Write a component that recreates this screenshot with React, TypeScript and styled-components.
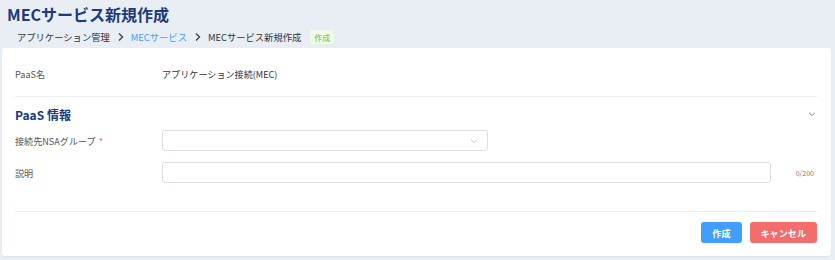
import React from 'react';
import styled, { createGlobalStyle } from 'styled-components';

const GlobalStyle = createGlobalStyle`
  html, body {
    margin: 0;
    padding: 0;
    background: #e9edf4;
    font-family: "Noto Sans CJK JP", "Noto Sans", sans-serif;
    color: #333;
  }
`;

const Page = styled.div`
  width: 835px;
  height: 260px;
  box-sizing: border-box;
  padding: 2px 4px 4px 2px;
  display: flex;
  flex-direction: column;
`;

const Title = styled.h1`
  margin: 0 0 0 5px;
  font-size: 16px;
  line-height: 24px;
  font-weight: 700;
  color: #1c3a7e;
`;

const Crumbs = styled.nav`
  display: flex;
  align-items: center;
  gap: 6px;
  height: 20px;
  margin: 2px 0 2px 15px;
  font-size: 9.3px;
`;

const Crumb = styled.span<{ $link?: boolean }>`
  color: ${(p) => (p.$link ? '#409eff' : '#333')};
`;

const Tag = styled.span`
  display: inline-flex;
  align-items: center;
  height: 14px;
  margin-left: 2px;
  padding: 0 4px;
  font-size: 8px;
  color: #67c23a;
  background: #f0f9eb;
  border: 1px solid #e1f3d8;
  border-radius: 2px;
`;

const Card = styled.section`
  flex: 1;
  background: #fff;
  border-radius: 3px;
  padding: 15px 14px 13px 13px;
  display: flex;
  flex-direction: column;
  box-shadow: 0 1px 2px rgba(0, 0, 0, 0.05);
`;

const Row = styled.div<{ $mt?: number }>`
  display: flex;
  align-items: center;
  height: 21px;
  margin-top: ${(p) => p.$mt ?? 0}px;
`;

const Label = styled.div`
  width: 147px;
  flex: none;
  font-size: 9.1px;
  color: #555;
`;

const Value = styled.div`
  font-size: 9.1px;
  color: #333;
`;

const Required = styled.span`
  color: #f56c6c;
  margin-left: 3px;
`;

const Divider = styled.hr<{ $mt: number }>`
  border: none;
  border-top: 1px solid #ebeef5;
  margin: ${(p) => p.$mt}px 0 0 0;
`;

const SectionHead = styled.div`
  display: flex;
  align-items: center;
  justify-content: space-between;
  height: 18px;
  margin-top: 8px;
`;

const SectionTitle = styled.h2`
  margin: 0;
  font-size: 12px;
  font-weight: 700;
  color: #1c3a7e;
`;

const Select = styled.div`
  width: 326px;
  height: 21px;
  box-sizing: border-box;
  border: 1px solid #dcdfe6;
  border-radius: 3px;
  display: flex;
  align-items: center;
  justify-content: flex-end;
  padding-right: 8px;
`;

const Input = styled.div`
  width: 609px;
  height: 21px;
  box-sizing: border-box;
  border: 1px solid #dcdfe6;
  border-radius: 3px;
`;

const Counter = styled.div`
  flex: 1;
  text-align: right;
  font-size: 7px;
  color: #777;
  padding-right: 3px;
`;

const Actions = styled.div`
  display: flex;
  justify-content: flex-end;
  gap: 8px;
  margin-top: 10px;
`;

const Button = styled.button<{ $bg: string }>`
  height: 21px;
  padding: 0 11px;
  border: none;
  border-radius: 3px;
  background: ${(p) => p.$bg};
  color: #fff;
  font-family: inherit;
  font-size: 9.1px;
  font-weight: 700;
`;

const Chevron = ({ color, size }: { color: string; size: number }) => (
  <svg width={size} height={size} viewBox="0 0 12 12" fill="none">
    <path d="M2.5 4.5 6 8l3.5-3.5" stroke={color} strokeWidth="1" />
  </svg>
);

const Sep = () => (
  <svg width="9" height="10" viewBox="0 0 9 10" fill="none">
    <path d="M3 1.5 6.5 5 3 8.5" stroke="#444" strokeWidth="1.4" />
  </svg>
);

export default function App() {
  return (
    <Page>
      <GlobalStyle />
      <Title>MECサービス新規作成</Title>
      <Crumbs>
        <Crumb>アプリケーション管理</Crumb>
        <Sep />
        <Crumb $link>MECサービス</Crumb>
        <Sep />
        <Crumb>MECサービス新規作成</Crumb>
        <Tag>作成</Tag>
      </Crumbs>
      <Card>
        <Row>
          <Label>PaaS名</Label>
          <Value>アプリケーション接続(MEC)</Value>
        </Row>
        <Divider $mt={12} />
        <SectionHead>
          <SectionTitle>PaaS 情報</SectionTitle>
          <Chevron color="#666" size={10} />
        </SectionHead>
        <Row $mt={7}>
          <Label>
            接続先NSAグループ<Required>*</Required>
          </Label>
          <Select>
            <Chevron color="#bbb" size={10} />
          </Select>
        </Row>
        <Row $mt={11}>
          <Label>説明</Label>
          <Input />
          <Counter>0/200</Counter>
        </Row>
        <Divider $mt={28} />
        <Actions>
          <Button $bg="#409eff">作成</Button>
          <Button $bg="#f56c6c">キャンセル</Button>
        </Actions>
      </Card>
    </Page>
  );
}
